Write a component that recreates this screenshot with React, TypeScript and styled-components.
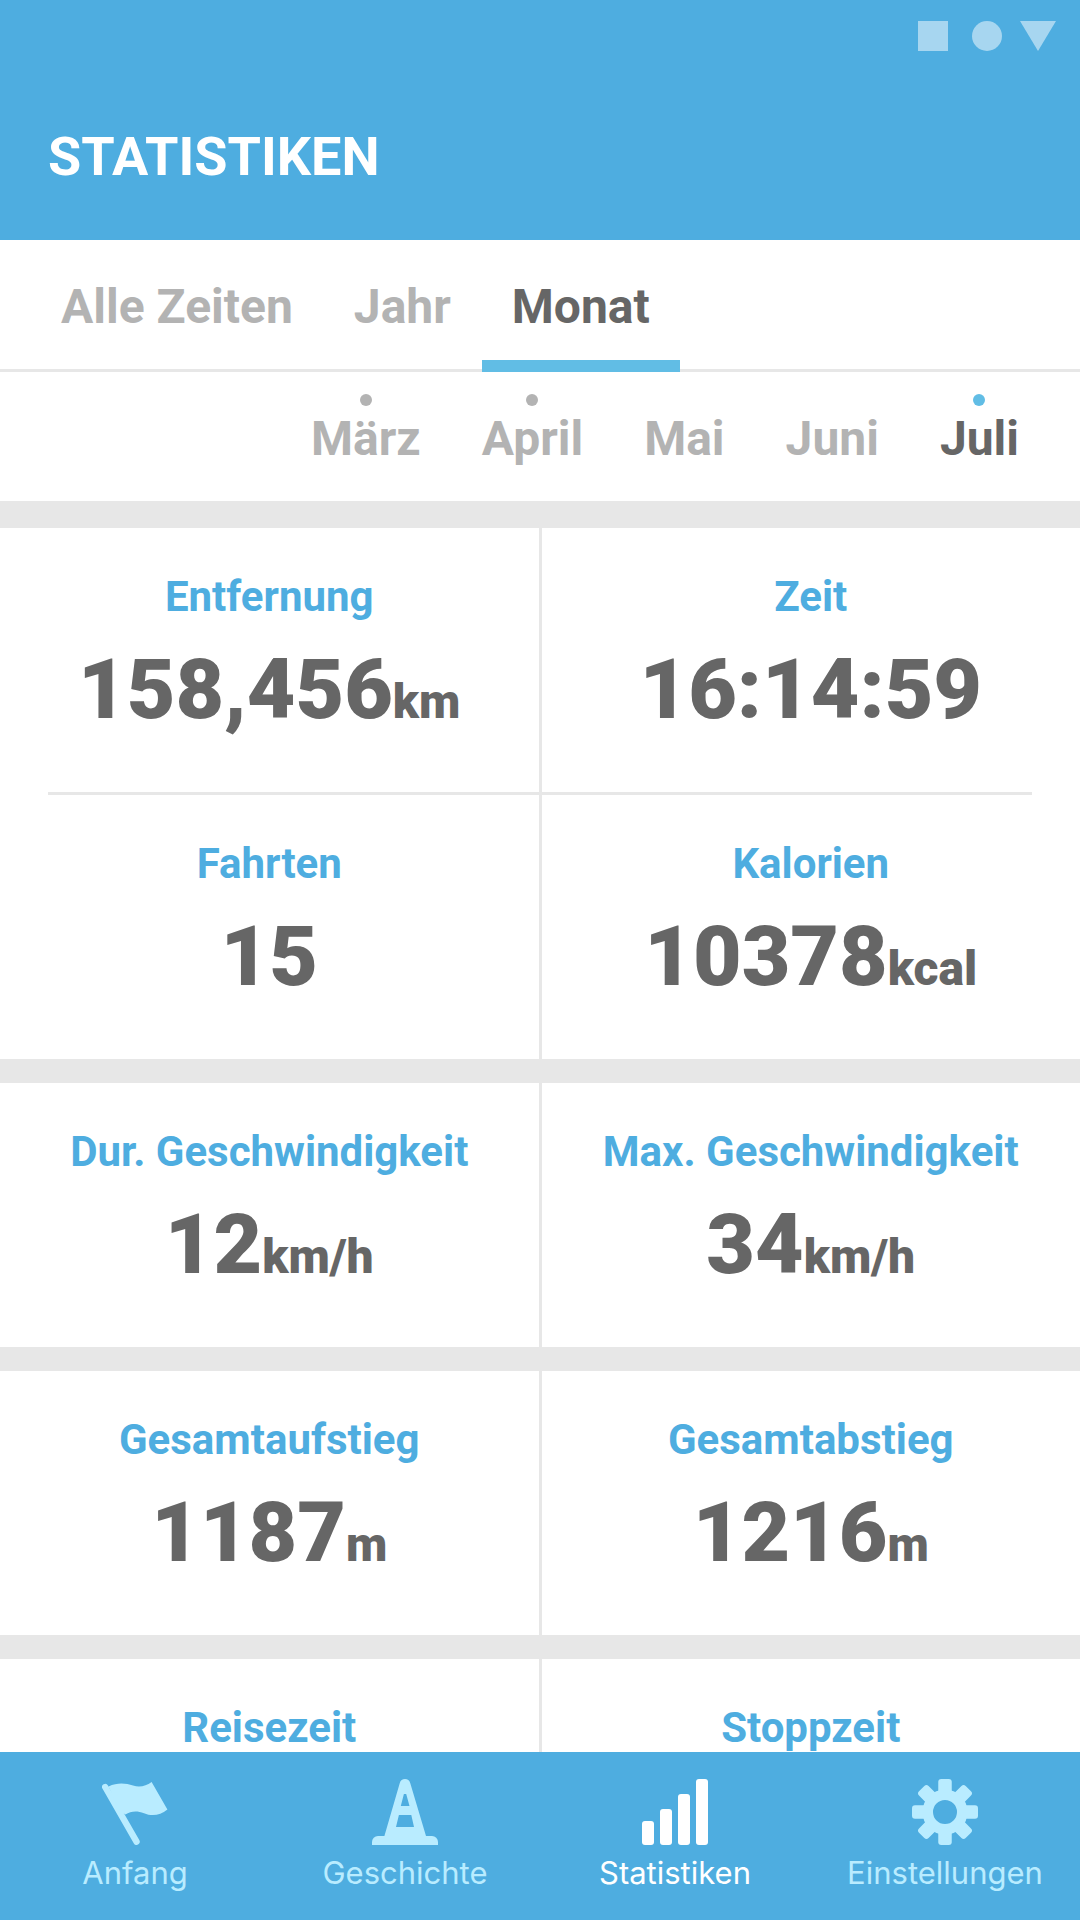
import React, { useState } from 'react';
import styled, { createGlobalStyle } from 'styled-components';

const color = {
  primary: '#4eade0',
  accent: '#61bde5',
  line: '#e7e7e7',
  muted: '#b3b3b3',
  text: '#666666',
  navIdle: '#b9ecff',
};

const GlobalStyle = createGlobalStyle`
  *, *::before, *::after { box-sizing: border-box; }
  body {
    margin: 0;
    background: #fff;
    font-family: Roboto, "Liberation Sans", sans-serif;
  }
  button { border: 0; background: none; font: inherit; cursor: pointer; }
`;

const Screen = styled.div`
  display: flex;
  flex-direction: column;
  height: 100vh;
`;

const Header = styled.header`
  flex: none;
  background: ${color.primary};
  color: #fff;
`;

const StatusBar = styled.div`
  display: flex;
  justify-content: flex-end;
  padding: 21px 24px;
  svg { display: block; }
`;

const Title = styled.h1`
  margin: 0;
  padding: 53px 48px 51px;
  font-size: 54px;
  line-height: 64px;
  font-weight: 700;
`;

const TabRow = styled.nav`
  display: flex;
  flex: none;
  gap: 1px;
  padding: 0 31px;
  border-bottom: 3px solid ${color.line};
`;

const MonthRow = styled.nav`
  display: flex;
  flex: none;
  gap: 1px;
  justify-content: flex-end;
  padding: 0 31px;
`;

const Tab = styled.button<{ $active: boolean }>`
  position: relative;
  padding: 39px 30px 34px;
  font-size: 48px;
  line-height: 56px;
  font-weight: 700;
  color: ${(p) => (p.$active ? color.text : color.muted)};
`;

const RangeTab = styled(Tab)`
  &::after {
    content: '';
    display: ${(p) => (p.$active ? 'block' : 'none')};
    position: absolute;
    left: 0;
    right: 0;
    bottom: -3px;
    height: 12px;
    background: ${color.accent};
  }
`;

const MonthTab = styled(Tab)<{ $marked: boolean }>`
  &::before {
    content: '';
    display: ${(p) => (p.$marked ? 'block' : 'none')};
    position: absolute;
    top: 22px;
    left: calc(50% - 6px);
    width: 12px;
    height: 12px;
    border-radius: 50%;
    background: ${(p) => (p.$active ? color.accent : color.muted)};
  }
`;

const Stats = styled.main`
  display: flex;
  flex-direction: column;
  flex: 1;
  gap: 24px;
  min-height: 0;
  overflow: hidden;
  border-top: 27px solid ${color.line};
  background: ${color.line};
`;

const Group = styled.section`
  flex: none;
  background: #fff;
`;

const Separator = styled.hr`
  height: 3px;
  margin: 0 48px;
  border: 0;
  background: ${color.line};
`;

const StatRow = styled.dl`
  display: flex;
  margin: 0;
`;

const Stat = styled.div`
  flex: 1 1 0;
  min-width: 0;
  min-height: 264px;
  padding: 45px 0 60px;
  text-align: center;
`;

const Divider = styled.div`
  flex: none;
  width: 3px;
  background: ${color.line};
`;

const StatLabel = styled.dt`
  font-size: 42px;
  line-height: 48px;
  font-weight: 700;
  color: ${color.primary};
`;

const StatValue = styled.dd`
  display: flex;
  justify-content: center;
  align-items: baseline;
  margin: 27px 0 0;
  font-size: 84px;
  line-height: 84px;
  font-weight: 900;
  color: ${color.text};
`;

const Unit = styled.span`
  font-size: 48px;
  line-height: 48px;
`;

const BottomNav = styled.nav`
  display: grid;
  grid-template-columns: repeat(4, 1fr);
  flex: none;
  background: ${color.primary};
`;

const NavItem = styled.button<{ $active: boolean }>`
  display: flex;
  flex-direction: column;
  align-items: center;
  gap: 10px;
  padding: 27px 0 29px;
  font-family: Inter, Roboto, sans-serif;
  font-size: 31px;
  line-height: 36px;
  color: ${(p) => (p.$active ? '#fff' : color.navIdle)};
  svg { display: block; width: 66px; height: 66px; fill: currentColor; }
`;

const FlagIcon = () => (
  <svg viewBox="0 0 66 66" aria-hidden="true">
    <path d="M3.2 8 34.5 62.7" stroke="currentColor" strokeWidth="6.4" strokeLinecap="round" />
    <path d="M6.5 7.4C16 3 24 4.200 31 6.600 38 8.800 44 7 49.600 3L65.400 30.500C58 36.500 50 37.500 42 34.200 35 31.400 29 31.800 23.400 35.600L18 32Z" />
  </svg>
);

const ConeIcon = () => (
  <svg viewBox="0 0 66 66" aria-hidden="true">
    <path
      fillRule="evenodd"
      d="M33 0C35.500 0 37.600 1.500 38.200 4L54 57H60A6 6 0 0 1 66 63V66H0V63A6 6 0 0 1 6 57H12.400L27.800 4C28.400 1.500 30.500 0 33 0ZM31.900 15 28.800 27H37.500L34.200 15ZM26.900 36 24 48H42L39.300 36Z"
    />
  </svg>
);

const BarsIcon = () => (
  <svg viewBox="0 0 66 66" aria-hidden="true">
    <rect x="0" y="42" width="12" height="24" rx="3" />
    <rect x="18" y="30" width="12" height="36" rx="3" />
    <rect x="36" y="15" width="12" height="51" rx="3" />
    <rect x="54" y="0" width="12" height="66" rx="3" />
  </svg>
);

const GearIcon = () => (
  <svg viewBox="0 0 66 66" aria-hidden="true">
    <circle cx="33" cy="33" r="17.250" fill="none" stroke="currentColor" strokeWidth="10.500" />
    {[0, 45, 90, 135, 180, 225, 270, 315].map((angle) => (
      <rect key={angle} x="26.250" y="0" width="13.500" height="16" rx="3" transform={`rotate(${angle} 33 33)`} />
    ))}
  </svg>
);

const StatusIcons = () => (
  <svg width="138" height="30" viewBox="0 0 138 30" fill="#fff" fillOpacity="0.5" aria-hidden="true">
    <rect width="30" height="30" />
    <circle cx="69" cy="15" r="15" />
    <path d="M102 0H138L120 30Z" />
  </svg>
);

type StatData = { label: string; value?: string; unit?: string };

const groups: [StatData, StatData][][] = [
  [
    [{ label: 'Entfernung', value: '158,456', unit: 'km' }, { label: 'Zeit', value: '16:14:59' }],
    [{ label: 'Fahrten', value: '15' }, { label: 'Kalorien', value: '10378', unit: 'kcal' }],
  ],
  [[{ label: 'Dur. Geschwindigkeit', value: '12', unit: 'km/h' }, { label: 'Max. Geschwindigkeit', value: '34', unit: 'km/h' }]],
  [[{ label: 'Gesamtaufstieg', value: '1187', unit: 'm' }, { label: 'Gesamtabstieg', value: '1216', unit: 'm' }]],
  [[{ label: 'Reisezeit' }, { label: 'Stoppzeit' }]],
];

const ranges = ['Alle Zeiten', 'Jahr', 'Monat'];

const months = [
  { name: 'März', marked: true },
  { name: 'April', marked: true },
  { name: 'Mai', marked: false },
  { name: 'Juni', marked: false },
  { name: 'Juli', marked: true },
];

const navItems = [
  { label: 'Anfang', Icon: FlagIcon },
  { label: 'Geschichte', Icon: ConeIcon },
  { label: 'Statistiken', Icon: BarsIcon },
  { label: 'Einstellungen', Icon: GearIcon },
];

const StatCell = ({ label, value, unit }: StatData) => (
  <Stat>
    <StatLabel>{label}</StatLabel>
    {value && (
      <StatValue>
        {value}
        {unit && <Unit>{unit}</Unit>}
      </StatValue>
    )}
  </Stat>
);

export default function App() {
  const [range, setRange] = useState('Monat');
  const [month, setMonth] = useState('Juli');
  const [page, setPage] = useState('Statistiken');

  return (
    <Screen>
      <GlobalStyle />
      <Header>
        <StatusBar>
          <StatusIcons />
        </StatusBar>
        <Title>STATISTIKEN</Title>
      </Header>
      <TabRow>
        {ranges.map((name) => (
          <RangeTab key={name} type="button" $active={name === range} onClick={() => setRange(name)}>
            {name}
          </RangeTab>
        ))}
      </TabRow>
      <MonthRow>
        {months.map(({ name, marked }) => (
          <MonthTab key={name} type="button" $active={name === month} $marked={marked} onClick={() => setMonth(name)}>
            {name}
          </MonthTab>
        ))}
      </MonthRow>
      <Stats>
        {groups.map((rows, g) => (
          <Group key={g}>
            {rows.map(([left, right], r) => (
              <React.Fragment key={left.label}>
                {r > 0 && <Separator />}
                <StatRow>
                  <StatCell {...left} />
                  <Divider />
                  <StatCell {...right} />
                </StatRow>
              </React.Fragment>
            ))}
          </Group>
        ))}
      </Stats>
      <BottomNav>
        {navItems.map(({ label, Icon }) => (
          <NavItem key={label} type="button" $active={label === page} onClick={() => setPage(label)}>
            <Icon />
            {label}
          </NavItem>
        ))}
      </BottomNav>
    </Screen>
  );
}
